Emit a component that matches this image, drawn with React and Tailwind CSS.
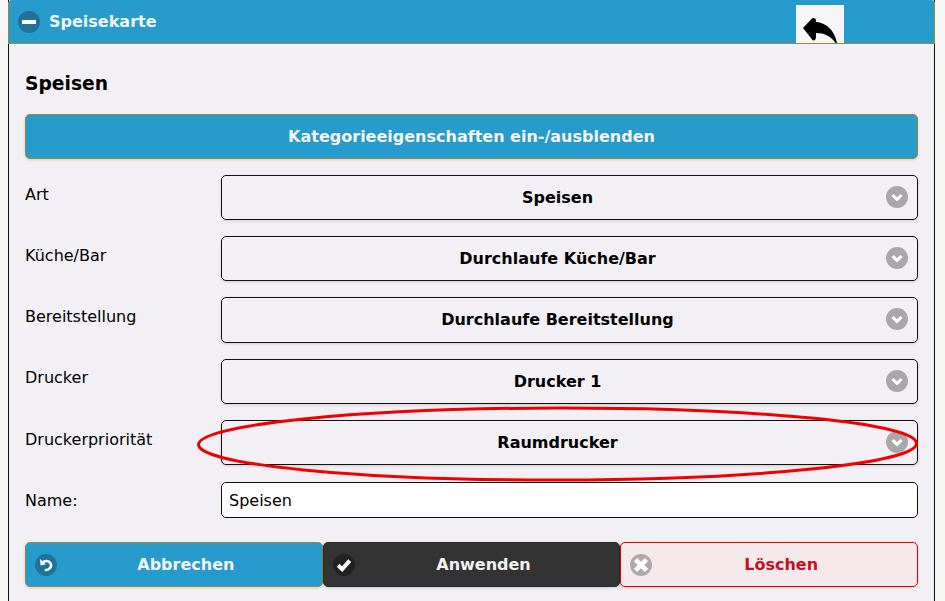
import React from "react";

const rows = [
  { label: "Art", value: "Speisen" },
  { label: "Küche/Bar", value: "Durchlaufe Küche/Bar" },
  { label: "Bereitstellung", value: "Durchlaufe Bereitstellung" },
  { label: "Drucker", value: "Drucker 1" },
  { label: "Druckerpriorität", value: "Raumdrucker" },
];

function CircleIcon({ bg, children }) {
  return (
    <span className={`absolute left-[9px] top-[11px] flex h-[22px] w-[22px] items-center justify-center rounded-full ${bg}`}>
      <svg width="16" height="16" viewBox="0 0 14 14" fill="none">
        {children}
      </svg>
    </span>
  );
}

function Chevron() {
  return (
    <span className="absolute right-[9px] top-[10px] flex h-[22px] w-[22px] items-center justify-center rounded-full bg-[#a9a7aa]">
      <svg width="14" height="14" viewBox="0 0 14 14" fill="none">
        <path d="M2.5 5L7 9.4L11.5 5" stroke="#fff" strokeWidth="3" />
      </svg>
    </span>
  );
}

function SelectRow({ label, value }) {
  return (
    <div className="flex h-[45.25px] items-start">
      <label className="w-[196px] shrink-0 pt-[8.7px] text-[16px] leading-[22px] text-black">{label}</label>
      <div className="relative flex h-full flex-1 items-center justify-center rounded-[5px] border border-[#111] bg-[#f2f0f4] pt-[0.5px] pr-[24px] text-[16px] font-bold text-black shadow-[0_1px_3px_rgba(0,0,0,0.15)]">
        <span>{value}</span>
        <Chevron />
      </div>
    </div>
  );
}

export default function App() {
  return (
    <div className="h-[601px] w-[945px] overflow-hidden bg-[#f6f6f6] pl-[8px] pr-[10px] font-['DejaVu_Sans',sans-serif]">
      <div className="relative h-[601px] border-x border-[#111] bg-[#f2f0f4]">
        {/* Header */}
        <div className="relative -mx-px flex h-[44px] items-center rounded-t-[4px] border-x border-b border-[#a08a2e] bg-[#279ccc]">
          <span className="ml-[9px] flex h-[22px] w-[22px] items-center justify-center rounded-full bg-[#1f7398]">
            <span className="h-[4px] w-[14px] bg-white" />
          </span>
          <span className="ml-[9px] text-[16px] font-bold text-[#f3f3f3]">Speisekarte</span>
          <div className="absolute left-[787px] top-[5px] h-[38px] w-[48px] overflow-hidden bg-[#f6f6f6]">
            <svg width="48" height="38" viewBox="0 0 48 38">
              <path d="M7 23L16 13.5Q19 12 20 15V17C30 18 38 24 41 38H39.5C35 31 28 28 20 28V32Q19.5 36.5 16.5 35Z" fill="#000" />
            </svg>
          </div>
        </div>

        <div className="px-[16px]">
          <h1 className="mt-[27px] text-[18.72px] font-bold leading-[26px] text-black">Speisen</h1>

          <button className="mt-[17px] flex h-[45px] w-full items-center justify-center rounded-[5px] border border-[#a08a2e] bg-[#279ccc] text-[16px] font-bold text-[#f3f3f3] shadow-[0_1px_3px_rgba(0,0,0,0.15)]">
            Kategorieeigenschaften ein-/ausblenden
          </button>

          <div className="mt-[15.9px] flex flex-col gap-[16px]">
            {rows.map((row) => (
              <SelectRow key={row.label} label={row.label} value={row.value} />
            ))}
          </div>

          <div className="mt-[17.1px] flex h-[36px] items-center">
            <label className="w-[196px] shrink-0 pt-[2px] text-[16px] text-black">Name:</label>
            <input
              readOnly
              value="Speisen"
              className="h-full flex-1 rounded-[5px] border border-[#111] bg-white px-[7px] text-[16px] text-black outline-none"
            />
          </div>

          <div className="mt-[24px] flex h-[45px]">
            <button className="relative flex-1 rounded-[5px] border border-[#a08a2e] bg-[#279ccc] pl-[24px] text-[16px] font-bold text-[#f3f3f3] shadow-[0_1px_3px_rgba(0,0,0,0.15)]">
              <CircleIcon bg="bg-[#1f7398]">
                <path d="M4 5C5.5 3 9.5 3 11 5.5C12.5 8.5 10 11.5 6 11.5" stroke="#fff" strokeWidth="2.2" />
                <path d="M1.8 1.8L2.2 7.4L7 6.4Z" fill="#fff" />
              </CircleIcon>
              Abbrechen
            </button>
            <button className="relative flex-1 rounded-[5px] border border-[#2b2b2b] bg-[#333] pl-[24px] text-[16px] font-bold text-[#f3f3f3] shadow-[0_1px_3px_rgba(0,0,0,0.15)]">
              <CircleIcon bg="bg-[#222]">
                <path d="M1.8 7.2L5.4 10.6L12 3.2" stroke="#fff" strokeWidth="3.4" />
              </CircleIcon>
              Anwenden
            </button>
            <button className="relative flex-1 rounded-[5px] border border-[#e00000] bg-[#f5e9ec] pl-[24px] text-[16px] font-bold text-[#c8101c] shadow-[0_1px_3px_rgba(0,0,0,0.15)]">
              <CircleIcon bg="bg-[#b0a8ac]">
                <path d="M2.2 2.2L11.8 11.8M11.8 2.2L2.2 11.8" stroke="#fff" strokeWidth="4" />
              </CircleIcon>
              Löschen
            </button>
          </div>
        </div>

        {/* Hand-drawn marker around the printer priority row */}
        <svg className="pointer-events-none absolute left-[180px] top-[400px]" width="745" height="90" viewBox="0 0 745 90" fill="none">
          <ellipse cx="368.5" cy="44" rx="359" ry="36" stroke="#f00000" strokeWidth="3" transform="rotate(-0.1 368.5 44)" />
        </svg>
      </div>
    </div>
  );
}
